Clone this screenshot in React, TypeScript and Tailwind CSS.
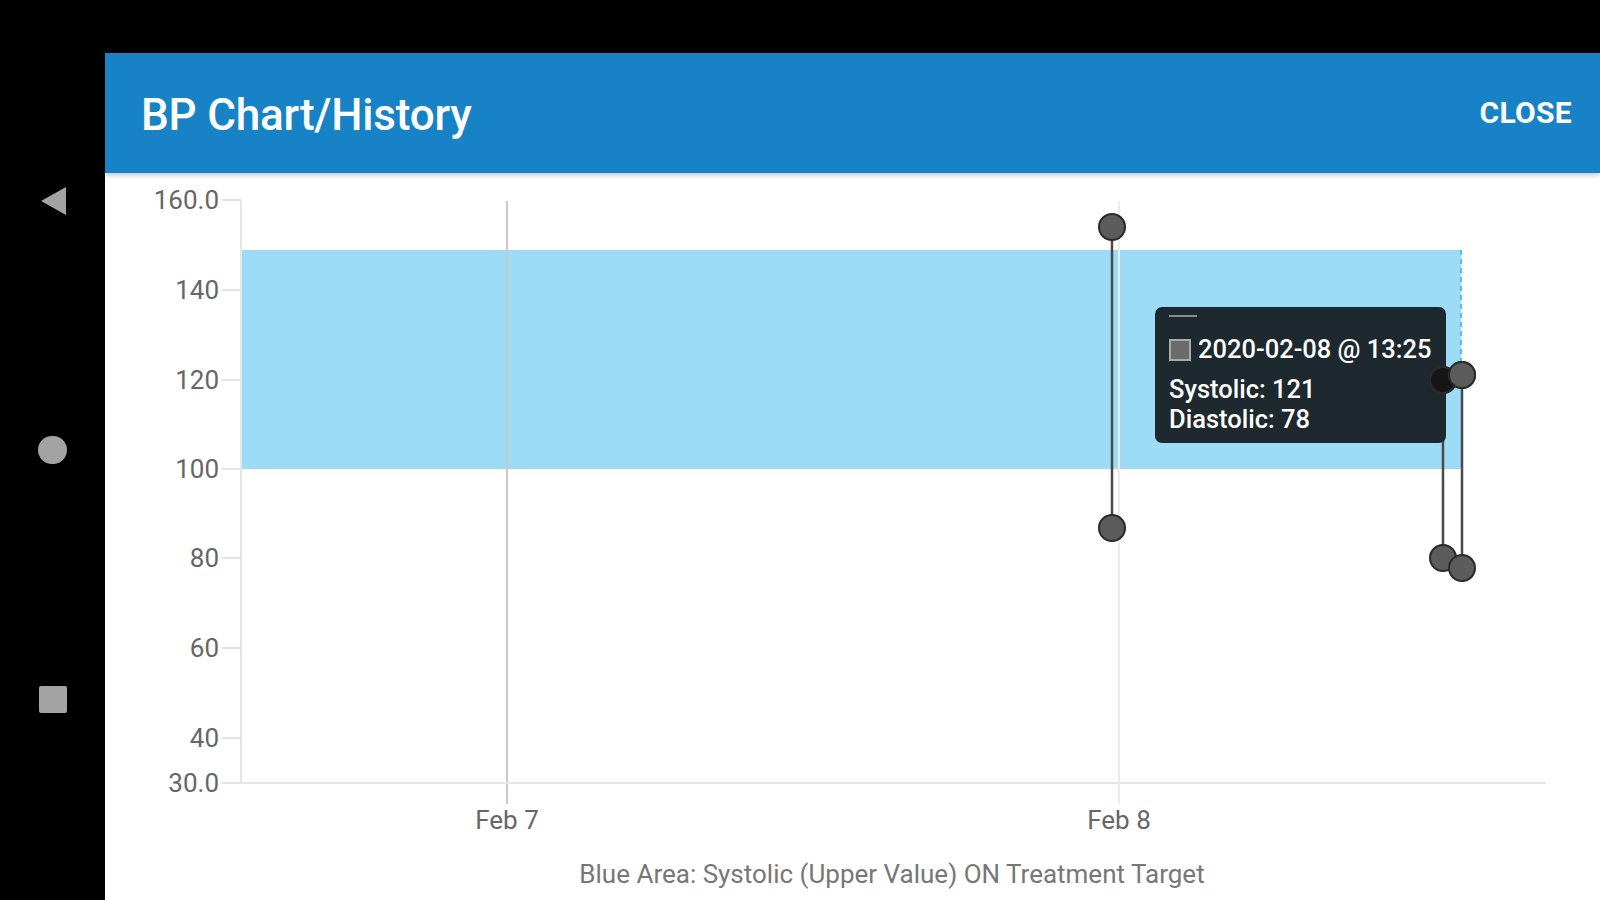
import React from "react";

const yTicks: { label: string; y: number }[] = [
  { label: "160.0", y: 200 },
  { label: "140", y: 290 },
  { label: "120", y: 380 },
  { label: "100", y: 469 },
  { label: "80", y: 558 },
  { label: "60", y: 648 },
  { label: "40", y: 738 },
  { label: "30.0", y: 783 },
];

const readings = [
  { x: 1112, top: 227, bottom: 528, hover: false },
  { x: 1443, top: 380, bottom: 558, hover: true },
  { x: 1462, top: 375, bottom: 568, hover: false },
];

function Chart() {
  return (
    <svg
      className="absolute inset-0 h-full w-full"
      viewBox="105 173 1495 727"
      width={1495}
      height={727}
      style={{ fontFamily: "Roboto, 'Liberation Sans', sans-serif" }}
    >
      {/* target band */}
      <rect x={241} y={250} width={1220} height={219} fill="#9cdcf6" />
      <line x1={1461} y1={250} x2={1461} y2={362} stroke="#4fc0f0" strokeWidth={2} strokeDasharray="5 4" />

      {/* grid lines */}
      <line x1={507} y1={201} x2={507} y2={804} stroke="#c9c9c9" strokeWidth={2} />
      <line x1={1119} y1={201} x2={1119} y2={804} stroke="#ececec" strokeWidth={2} />

      {/* axes */}
      <line x1={241} y1={201} x2={241} y2={783} stroke="#e6e6e6" strokeWidth={2} />
      <line x1={222} y1={783} x2={1546} y2={783} stroke="#e6e6e6" strokeWidth={2} />

      {yTicks.map((t) => (
        <g key={t.label}>
          <line x1={222} y1={t.y} x2={241} y2={t.y} stroke="#e3e3e3" strokeWidth={2} />
          <text x={219} y={t.y} textAnchor="end" dominantBaseline="central" fontSize={26} fill="#666">
            {t.label}
          </text>
        </g>
      ))}

      <text x={507} y={820} textAnchor="middle" dominantBaseline="central" fontSize={26} fill="#666">
        Feb 7
      </text>
      <text x={1119} y={820} textAnchor="middle" dominantBaseline="central" fontSize={26} fill="#666">
        Feb 8
      </text>

      {readings.map((r, i) => (
        <g key={i}>
          <line x1={r.x} y1={r.top} x2={r.x} y2={r.bottom} stroke="#4a4a4a" strokeWidth={2.5} />
          <circle cx={r.x} cy={r.top} r={13} fill={r.hover ? "#1e1e1e" : "#5c5c5c"} stroke="#2a2a2a" strokeWidth={2} />
          <circle cx={r.x} cy={r.bottom} r={13} fill="#5c5c5c" stroke="#2a2a2a" strokeWidth={2} />
        </g>
      ))}

      <text x={892} y={874} textAnchor="middle" dominantBaseline="central" fontSize={26} fill="#777">
        Blue Area: Systolic (Upper Value) ON Treatment Target
      </text>
    </svg>
  );
}

function HoverMarkers() {
  return (
    <svg
      className="pointer-events-none absolute inset-0 h-full w-full"
      viewBox="105 173 1495 727"
      width={1495}
      height={727}
    >
      <circle cx={1443} cy={380} r={13} fill="#161616" stroke="#2a2a2a" strokeWidth={2} />
      <circle cx={1462} cy={375} r={13} fill="#5c5c5c" stroke="#2a2a2a" strokeWidth={2} />
    </svg>
  );
}

function Tooltip() {
  return (
    <div
      className="absolute left-[1050px] top-[134px] flex h-[136px] w-[291px] flex-col rounded-[7px] bg-[#1e292f] pl-[14px] pt-[8px] text-white"
      style={{ fontFamily: "Roboto, 'Liberation Sans', sans-serif" }}
    >
      <div className="h-[2px] w-[28px] bg-[#8a8a8a]" />
      <div className="mt-[20px] flex items-center gap-[7px]">
        <div className="h-[22px] w-[22px] border-2 border-[#aaa] bg-[#6b6b6b]" />
        <span className="text-[25.5px] font-medium leading-none">2020-02-08 @ 13:25</span>
      </div>
      <div className="mt-[11px] text-[25.5px] font-medium leading-[30px]">Systolic: 121</div>
      <div className="text-[25.5px] font-medium leading-[30px]">Diastolic: 78</div>
    </div>
  );
}

export default function App() {
  return (
    <div
      className="flex h-[900px] w-[1600px] overflow-hidden bg-black"
      style={{ fontFamily: "Roboto, 'Liberation Sans', sans-serif" }}
    >
      {/* nav bar */}
      <div className="flex w-[105px] shrink-0 flex-col items-center pt-[186px]">
        <svg width={28} height={30} viewBox="0 0 28 30" className="ml-[2px]">
          <polygon points="26,1 26,29 1,15" fill="#a3a3a3" />
        </svg>
        <div className="mt-[220px] h-[28px] w-[29px] rounded-full bg-[#a3a3a3]" />
        <div className="mt-[222px] h-[27px] w-[28px] rounded-[2px] bg-[#a3a3a3]" />
      </div>

      {/* dialog */}
      <div className="mt-[53px] flex flex-1 flex-col">
        <div className="relative z-10 flex h-[120px] shrink-0 items-center justify-between bg-[#1783c6] pl-[36px] pr-[28px] shadow-[0_3px_4px_rgba(0,0,0,0.18)]">
          <span className="mt-[4px] text-[44px] font-medium tracking-[-0.2px] text-white">BP Chart/History</span>
          <span className="mb-[2px] text-[30px] font-bold tracking-[0.3px] text-white">CLOSE</span>
        </div>
        <div className="relative flex-1 bg-white">
          <Chart />
          <Tooltip />
          <HoverMarkers />
        </div>
      </div>
    </div>
  );
}
